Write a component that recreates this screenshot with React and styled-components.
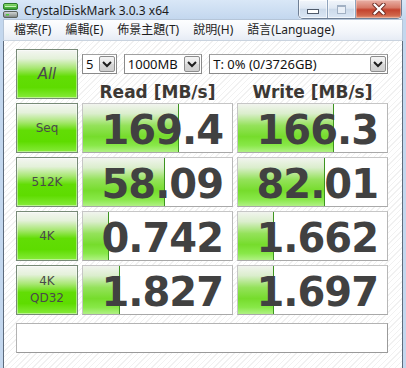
import React from 'react';
import styled, { createGlobalStyle } from 'styled-components';

const GlobalStyle = createGlobalStyle`
  html, body {
    margin: 0;
    padding: 0;
  }
  body {
    width: 406px;
    height: 368px;
    overflow: hidden;
    background: #c3d7ee;
    font-family: "Noto Sans", "Noto Sans CJK TC", sans-serif;
  }
`;

const menuItems = ['檔案(F)', '編輯(E)', '佈景主題(T)', '說明(H)', '語言(Language)'];

// bar widths are in px of a 151px box
const results = [
  { label: 'Seq', read: '169.4', readBar: 96, write: '166.3', writeBar: 96 },
  { label: '512K', read: '58.09', readBar: 82, write: '82.01', writeBar: 87 },
  { label: '4K', read: '0.742', readBar: 26, write: '1.662', writeBar: 36 },
  { label: '4K\nQD32', read: '1.827', readBar: 37, write: '1.697', writeBar: 36 },
];

const AppIcon = () => (
  <svg width="15" height="15" viewBox="0 0 15 15">
    <defs>
      <linearGradient id="ig" x1="0" y1="0" x2="0" y2="1">
        <stop offset="0" stopColor="#8fe070" />
        <stop offset="1" stopColor="#2f9a2a" />
      </linearGradient>
      <linearGradient id="dg" x1="0" y1="0" x2="0" y2="1">
        <stop offset="0" stopColor="#d8dcdc" />
        <stop offset="1" stopColor="#7c8482" />
      </linearGradient>
    </defs>
    <rect x="0.5" y="0.5" width="14" height="6" rx="1.5" fill="url(#ig)" stroke="#2c7a2a" />
    <line x1="2" y1="3.5" x2="13" y2="3.5" stroke="#c8f5b8" strokeWidth="1" />
    <rect x="0.5" y="8.5" width="14" height="6" rx="1.5" fill="url(#dg)" stroke="#5a625f" />
    <rect x="3" y="11" width="3" height="1.5" fill="#4ccf3a" />
  </svg>
);

const CloseIcon = () => (
  <svg width="14" height="12" viewBox="0 0 14 12">
    <path d="M2.5 1.5 L11.5 10.5 M11.5 1.5 L2.5 10.5" stroke="#6b2a22" strokeWidth="4.2" strokeLinecap="round" />
    <path d="M2.5 1.5 L11.5 10.5 M11.5 1.5 L2.5 10.5" stroke="#ffffff" strokeWidth="2.4" strokeLinecap="round" />
  </svg>
);

const Chevron = () => (
  <svg width="10" height="7" viewBox="0 0 10 7">
    <polyline points="1,1 5,5 9,1" fill="none" stroke="#1e1e1e" strokeWidth="2" />
  </svg>
);

const Select = ({ width, children }) => (
  <SelectBox $width={width}>
    <SelectText>{children}</SelectText>
    <DropButton>
      <Chevron />
    </DropButton>
  </SelectBox>
);

const ValueCell = ({ value, bar }) => (
  <ValueBox>
    <Bar style={{ width: bar }} />
    <ValueText>{value}</ValueText>
  </ValueBox>
);

const App = () => (
  <Window>
    <GlobalStyle />
    <TitleBar>
      <AppIcon />
      <Title>CrystalDiskMark 3.0.3 x64</Title>
      <Captions>
        <CaptionButton $w={28}>
          <MinGlyph />
        </CaptionButton>
        <CaptionButton $w={27}>
          <MaxGlyph />
        </CaptionButton>
        <CloseButton>
          <CloseIcon />
        </CloseButton>
      </Captions>
    </TitleBar>
    <Frame>
      <MenuBar>
        {menuItems.map(item => (
          <MenuItem key={item}>{item}</MenuItem>
        ))}
      </MenuBar>
      <Client>
        <Grid>
          <LabelButton $all>All</LabelButton>
          <TopArea>
            <Selects>
              <Select width={35}>5</Select>
              <Select width={79}>1000MB</Select>
              <Select width={180}>T: 0% (0/3726GB)</Select>
            </Selects>
            <Header>Read [MB/s]</Header>
            <Header>Write [MB/s]</Header>
          </TopArea>
          {results.map(row => (
            <React.Fragment key={row.label}>
              <LabelButton>{row.label}</LabelButton>
              <ValueCell value={row.read} bar={row.readBar} />
              <ValueCell value={row.write} bar={row.writeBar} />
            </React.Fragment>
          ))}
          <StatusBox />
        </Grid>
      </Client>
    </Frame>
  </Window>
);

export default App;

const Window = styled.div`
  width: 406px;
  height: 368px;
  display: flex;
  flex-direction: column;
  background: #c3d7ee;
`;

const TitleBar = styled.div`
  height: 23px;
  display: flex;
  align-items: flex-start;
  padding-left: 3px;
  background: linear-gradient(#d9e7f7, #c3d7ee);
  box-sizing: border-box;

  svg {
    margin-top: 3px;
  }
`;

const Title = styled.span`
  margin-left: 6px;
  margin-top: 3px;
  font-family: "Noto Sans", "Open Sans", sans-serif;
  font-size: 12px;
  line-height: 15px;
  color: #1b1b1b;
`;

const Captions = styled.div`
  margin-left: auto;
  margin-right: 4px;
  display: flex;
  height: 18px;
  border: 1px solid #6f7f95;
  border-top: none;
  border-radius: 0 0 5px 5px;
  overflow: hidden;
  box-shadow: 0 1px 0 rgba(255, 255, 255, 0.7);

  svg {
    margin-top: 0;
  }
`;

const CaptionButton = styled.div`
  width: ${({ $w }) => $w}px;
  display: flex;
  align-items: center;
  justify-content: center;
  background: linear-gradient(#f2f6fb, #dfe8f3 45%, #ccdaea 52%, #dbe7f5);
  border-right: 1px solid #8fa3bc;
  box-shadow: inset 0 0 0 1px rgba(255, 255, 255, 0.6);
`;

const MinGlyph = styled.div`
  width: 10px;
  height: 3px;
  margin-top: 5px;
  background: #fff;
  border: 1px solid #4f5a6a;
`;

const MaxGlyph = styled.div`
  width: 7px;
  height: 6px;
  border: 1px solid #a2b1c4;
  border-top-width: 2px;
  background: #e9eff7;
`;

const CloseButton = styled.div`
  width: 45px;
  display: flex;
  align-items: center;
  justify-content: center;
  background: linear-gradient(#e9b1a7, #d77b69 42%, #c4432e 55%, #d0654a 85%, #e39a7c);
  box-shadow: inset 0 0 0 1px rgba(255, 220, 210, 0.4);
`;

const Frame = styled.div`
  flex: 1;
  display: flex;
  flex-direction: column;
  padding: 0 3px 4px;
`;

const MenuBar = styled.div`
  height: 22px;
  box-sizing: border-box;
  display: flex;
  align-items: center;
  padding-left: 3px;
  background: linear-gradient(#fdfeff, #f2f5fa 60%, #e6ecf5);
  border: 1px solid #b5c5d8;
  border-bottom: 1px solid #c9d3df;
`;

const MenuItem = styled.span`
  padding: 0 7px;
  font-family: "Noto Sans", "Noto Sans CJK TC", sans-serif;
  font-size: 12px;
  line-height: 20px;
  color: #1e1e1e;
`;

const Client = styled.div`
  flex: 1;
  border: 1px solid #5d6b7c;
  border-top: none;
  background: repeating-linear-gradient(135deg, #ffffff 0 3px, #f1f1f1 3px 4px);
`;

const Grid = styled.div`
  display: grid;
  grid-template-columns: 62px 151px 151px;
  grid-auto-rows: 50px;
  column-gap: 4px;
  row-gap: 4px;
  padding: 8px 0 0 12px;
`;

const LabelButton = styled.div`
  box-sizing: border-box;
  display: flex;
  align-items: center;
  justify-content: center;
  text-align: center;
  white-space: pre-line;
  border: 1px solid #778a77;
  box-shadow: inset 0 0 0 1px rgba(255, 255, 255, 0.45);
  background: linear-gradient(#f4f6f2 0%, #e4f1da 18%, #a6e770 38%, #62dd05 55%, #5edc00 78%, #86eb3a 100%);
  font-family: "DejaVu Sans", sans-serif;
  font-style: ${({ $all }) => ($all ? 'italic' : 'normal')};
  font-size: ${({ $all }) => ($all ? '15px' : '12px')};
  line-height: ${({ $all }) => ($all ? '18px' : '17px')};
  color: #4a4a4a;
`;

const TopArea = styled.div`
  grid-column: 2 / span 2;
  display: grid;
  grid-template-columns: 151px 151px;
  grid-template-rows: 20px 1fr;
  column-gap: 4px;
  padding-top: 5px;
`;

const Selects = styled.div`
  grid-column: 1 / span 2;
  display: flex;
  gap: 7px;
`;

const SelectBox = styled.div`
  box-sizing: border-box;
  width: ${({ $width }) => $width}px;
  height: 20px;
  display: flex;
  align-items: stretch;
  background: #fff;
  border: 1px solid #8a8a8a;
  border-top-color: #a0a0a0;
  padding: 1px;
`;

const SelectText = styled.span`
  flex: 1;
  padding-left: 2px;
  font-family: "Noto Sans", sans-serif;
  font-size: 13px;
  line-height: 16px;
  color: #111;
  white-space: nowrap;
  overflow: hidden;
`;

const DropButton = styled.div`
  box-sizing: border-box;
  width: 16px;
  display: flex;
  align-items: center;
  justify-content: center;
  border: 1px solid #8d8d8d;
  border-radius: 2px;
  background: linear-gradient(#f4f4f4, #e6e6e6 50%, #d8d8d8 51%, #cfcfcf);
`;

const Header = styled.div`
  text-align: center;
  padding-top: 8px;
  font-family: "DejaVu Sans", sans-serif;
  font-weight: bold;
  font-size: 17px;
  line-height: 20px;
  color: #3c3834;
`;

const ValueBox = styled.div`
  position: relative;
  box-sizing: border-box;
  background: #fff;
  border: 1px solid #c6c6c6;
  border-bottom-color: #a9a9a9;
  border-right-color: #b7b7b7;
  overflow: hidden;
`;

const Bar = styled.div`
  position: absolute;
  left: 0;
  top: 0;
  bottom: 0;
  box-sizing: border-box;
  border-right: 1px solid #3d9420;
  background: linear-gradient(#f1f4ee 0%, #dbeecd 20%, #94e25a 45%, #76dc2c 68%, #88e848 86%, #b0f184 100%);
`;

const ValueText = styled.div`
  position: relative;
  text-align: right;
  padding-right: 9px;
  padding-top: 3px;
  font-family: "DejaVu Sans", sans-serif;
  font-weight: bold;
  font-size: 40px;
  letter-spacing: -1px;
  line-height: 46px;
  color: #414141;
`;

const StatusBox = styled.div`
  grid-column: 1 / span 3;
  height: 30px;
  margin-top: 4px;
  box-sizing: border-box;
  background: #fff;
  border: 1px solid #b3b3b3;
  border-bottom-color: #9a9a9a;
  border-right-color: #9a9a9a;
`;
